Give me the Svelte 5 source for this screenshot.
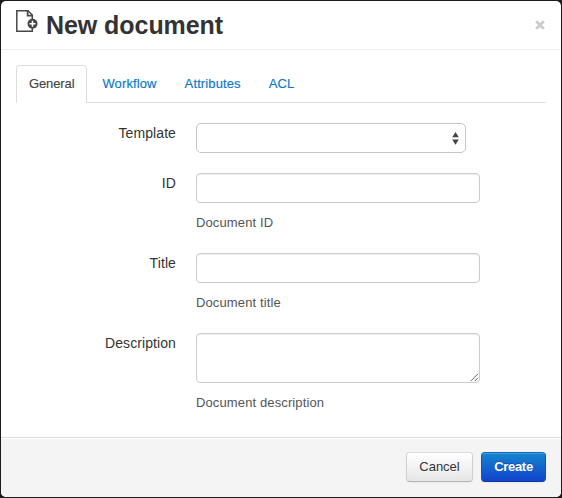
<script>
  const tabs = ['General', 'Workflow', 'Attributes', 'ACL'];
</script>

<div class="backdrop">
  <div class="modal">
    <header>
      <svg class="doc" width="23" height="24" viewBox="0 0 23 24">
        <path d="M.8 1.7H12L16.3 6V22.2H.8Z" fill="#fff" stroke="#484848" stroke-width="1.5" />
        <path d="M11.6 1.5V6.6H16.8" fill="none" stroke="#484848" stroke-width="1.7" />
        <circle cx="16.5" cy="14.7" r="5" fill="#444" />
        <path d="M16.5 11.7V17.7M13.5 14.7H19.5" stroke="#fff" stroke-width="1.6" />
      </svg>
      <h3>New document</h3>
      <button class="close" aria-label="Close">
        <svg width="10" height="10" viewBox="0 0 10 10"><path d="M1.2 1.2L8.8 8.8M8.8 1.2L1.2 8.8" stroke="#ccc" stroke-width="2.9" /></svg>
      </button>
    </header>
    <main>
      <nav>
        {#each tabs as tab, i}
          <a href="#{tab}" class:active={i === 0}>{tab}</a>
        {/each}
      </nav>
      <form>
        <div class="row template">
          <label for="template">Template</label>
          <div class="selectbox" id="template">
            <svg width="7" height="13" viewBox="0 0 7 13"><path d="M3.5 0L6.8 5.2H.2ZM3.5 12.8L.2 7.6H6.8Z" fill="#444" /></svg>
          </div>
        </div>
        <div class="row">
          <label for="id">ID</label>
          <div><input id="id" /><p>Document ID</p></div>
        </div>
        <div class="row">
          <label for="title">Title</label>
          <div><input id="title" /><p>Document title</p></div>
        </div>
        <div class="row">
          <label for="description">Description</label>
          <div>
            <div class="area">
              <textarea id="description"></textarea>
              <svg class="grip" width="9" height="9" viewBox="0 0 9 9"><path d="M.8 8L8 .8M4.8 8L8 4.8" stroke="#555" stroke-width=".9" /></svg>
            </div>
            <p>Document description</p>
          </div>
        </div>
      </form>
    </main>
    <footer>
      <button class="btn">Cancel</button>
      <button class="btn primary">Create</button>
    </footer>
  </div>
</div>

<style>
  :global(body) { margin: 0; background: #1d1c1f; }
  .backdrop, .backdrop * { box-sizing: border-box; }
  .backdrop {
    width: 562px; height: 498px; padding: 1px; background: #1d1c1f;
    font: 14px/20px "Liberation Sans", Arial, sans-serif; color: #333;
  }
  .modal {
    height: 496px; display: flex; flex-direction: column; overflow: hidden;
    background: #fff; border-radius: 5px;
  }
  header {
    height: 49px; flex: none; display: flex; align-items: flex-start;
    padding: 0 15px; border-bottom: 1px solid #eee;
  }
  .doc { flex: none; margin-top: 8px; }
  h3 { margin: 4px 0 0 7px; font-size: 25px; line-height: 40px; font-weight: bold; letter-spacing: -.06px; white-space: nowrap; }
  .close { display: flex; margin: 19px 1px 0 auto; padding: 0; border: 0; background: none; }
  main { flex: 1; padding: 15px 15px 0; }
  nav { display: flex; height: 38px; border-bottom: 1px solid #ddd; }
  nav a {
    height: 38px; padding: 8px 12px; margin-right: 2px; border: 1px solid transparent;
    border-radius: 4px 4px 0 0; color: #0a78c8; font-size: 13px; text-decoration: none;
    letter-spacing: .12px; -webkit-text-stroke: .15px currentColor;
  }
  nav a.active { color: #444; border-color: #ddd; border-bottom-color: #fff; background: #fff; letter-spacing: -.12px; }
  form { padding-top: 20px; }
  .row { display: flex; gap: 20px; height: 80px; }
  .row.template { height: 50px; }
  label { width: 160px; text-align: right; letter-spacing: .09px; }
  input, textarea, .selectbox {
    display: block; width: 284px; height: 30px; margin: 0; padding: 4px 6px;
    border: 1px solid #ccc; border-radius: 4px; background: #fff;
    box-shadow: inset 0 1px 1px rgba(0, 0, 0, .075); outline: 0;
  }
  .selectbox {
    width: 270px; display: flex; align-items: center; justify-content: flex-end;
    border-color: #c5c5c5; border-radius: 5px; box-shadow: none;
  }
  textarea { height: 50px; resize: none; }
  .area { position: relative; width: 284px; }
  .grip { position: absolute; right: 1px; bottom: 1px; }
  p { margin: 10px 0 0; font-size: 13px; color: #555; letter-spacing: .12px; }
  footer {
    height: 60px; flex: none; display: flex; justify-content: flex-end; gap: 8px;
    padding: 14px 15px; background: #f4f4f4; border-top: 1px solid #ddd;
    box-shadow: inset 0 1px 0 #fff;
  }
  .btn {
    width: 67px; height: 30px; padding: 0 0 1px; border: 1px solid #ccc;
    border-color: #dadada #d0d0d0 #b3b3b3; border-radius: 4px;
    font: 13px/20px "Liberation Sans", Arial, sans-serif; color: #333;
    background: linear-gradient(#fff, #e6e6e6); text-shadow: 0 1px 1px rgba(255, 255, 255, .75);
    box-shadow: inset 0 1px 0 rgba(255, 255, 255, .2), 0 1px 2px rgba(0, 0, 0, .05);
  }
  .primary {
    width: 65px; color: #fff; border-color: #0a6fb8 #1152c4 #0c36a2;
    background: linear-gradient(#1585d0, #1144cc); font-weight: bold; letter-spacing: -.3px;
    text-shadow: 0 -1px 0 rgba(0, 0, 0, .25);
  }
</style>
